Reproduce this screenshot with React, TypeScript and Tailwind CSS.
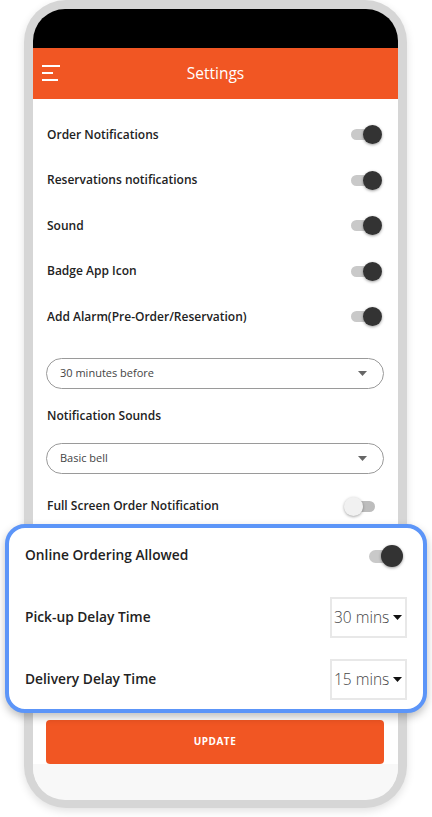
type ToggleProps = { on?: boolean; big?: boolean };

function Toggle({ on = true, big = false }: ToggleProps) {
  if (!on) {
    return (
      <div className="relative h-[19px] w-[31px] shrink-0">
        <div className="absolute right-0 top-[4px] h-[11px] w-[22px] rounded-full bg-[#bdbdbd]" />
        <div className="absolute left-0 top-0 h-[19px] w-[19px] rounded-full bg-[#f1f1f1] shadow-[0_1px_3px_rgba(0,0,0,0.35)]" />
      </div>
    );
  }
  if (big) {
    return (
      <div className="relative h-[22px] w-[34px] shrink-0">
        <div className="absolute left-0 top-[5px] h-[13px] w-[24px] rounded-full bg-[#c9c9c9]" />
        <div className="absolute right-0 top-0 h-[22px] w-[22px] rounded-full bg-[#333333] shadow-[0_1px_3px_rgba(0,0,0,0.4)]" />
      </div>
    );
  }
  return (
    <div className="relative h-[19px] w-[31px] shrink-0">
      <div className="absolute left-0 top-[4px] h-[11px] w-[22px] rounded-full bg-[#c9c9c9]" />
      <div className="absolute right-0 top-0 h-[19px] w-[19px] rounded-full bg-[#333333] shadow-[0_1px_3px_rgba(0,0,0,0.4)]" />
    </div>
  );
}

function Caret({ className = "" }: { className?: string }) {
  return (
    <svg width="9" height="5" viewBox="0 0 9 5" className={className}>
      <path d="M0 0h9L4.5 5z" fill="currentColor" />
    </svg>
  );
}

function ToggleRow({ label, on = true }: { label: string; on?: boolean }) {
  return (
    <div className="flex h-[45.5px] items-center justify-between">
      <span className="text-[12px] font-semibold text-[#222]">{label}</span>
      <Toggle on={on} />
    </div>
  );
}

function PillSelect({ value }: { value: string }) {
  return (
    <div className="flex h-[31px] items-center justify-between rounded-full border border-[#9a9a9a] pl-[13px] pr-[16px]">
      <span className="text-[11px] text-[#444]">{value}</span>
      <Caret className="text-[#666]" />
    </div>
  );
}

function BoxSelect({ value }: { value: string }) {
  return (
    <div className="flex h-[41px] w-[77px] items-center gap-[4px] border-2 border-[#e8e8e8] pl-[2px]">
      <span className="text-[15.5px] font-light text-[#444]">{value}</span>
      <Caret className="text-[#111]" />
    </div>
  );
}

export default function App() {
  const rows = [
    "Order Notifications",
    "Reservations notifications",
    "Sound",
    "Badge App Icon",
    "Add Alarm(Pre-Order/Reservation)",
  ];

  return (
    <div className="h-[817px] w-[432px] overflow-hidden bg-white font-['Open_Sans',sans-serif]">
      {/* phone frame */}
      <div className="ml-[24px] h-[808px] w-[383px] rounded-[42px] bg-[#d6d6d6] p-[9px] shadow-[0_3px_8px_rgba(0,0,0,0.12)]">
        <div className="flex h-full flex-col rounded-[32px] bg-white">
          <div className="h-[39px] shrink-0 rounded-t-[32px] bg-black" />
          <header className="relative flex h-[51px] shrink-0 items-center justify-center bg-[#f15623]">
            <div className="absolute left-[9px] top-[17px] flex flex-col gap-[5px]">
              <div className="h-[2px] w-[18px] bg-white" />
              <div className="h-[2px] w-[11px] bg-white" />
              <div className="h-[2px] w-[16px] bg-white" />
            </div>
            <span className="text-[15.5px] text-white">Settings</span>
          </header>

          <div className="flex flex-1 flex-col">
            <div className="px-[14px] pt-[13px] pr-[16px]">
              {rows.map((r) => (
                <ToggleRow key={r} label={r} />
              ))}
            </div>

            <div className="mt-[18px] px-[13px] pr-[14px]">
              <PillSelect value="30 minutes before" />
            </div>

            <div className="mt-[19px] flex h-[17px] items-center px-[14px]">
              <span className="text-[12px] font-semibold text-[#222]">Notification Sounds</span>
            </div>

            <div className="mt-[18px] px-[13px] pr-[14px]">
              <PillSelect value="Basic bell" />
            </div>

            <div className="mt-[23px] flex h-[19px] items-center justify-between pl-[14px] pr-[23px]">
              <span className="text-[12px] font-semibold text-[#222]">Full Screen Order Notification</span>
              <Toggle on={false} />
            </div>

            {/* highlighted card */}
            <div className="relative z-10 -ml-[28px] -mr-[29px] mt-[8px] rounded-[20px] border-4 border-[#5c95f8] bg-white pb-[9px] pl-[16px] pr-[16px] pt-[8px] shadow-[0_4px_8px_rgba(0,0,0,0.25)]">
              <div className="flex h-[40px] items-center justify-between pr-[4px]">
                <span className="text-[13.75px] font-semibold text-[#222]">Online Ordering Allowed</span>
                <Toggle big />
              </div>
              <div className="mt-[22px] flex h-[40px] items-center justify-between">
                <span className="text-[13.75px] font-semibold text-[#222]">Pick-up Delay Time</span>
                <BoxSelect value="30 mins" />
              </div>
              <div className="mt-[22px] flex h-[40px] items-center justify-between">
                <span className="text-[13.75px] font-semibold text-[#222]">Delivery Delay Time</span>
                <BoxSelect value="15 mins" />
              </div>
            </div>

            <div className="mt-[7px] px-[13px] pr-[14px]">
              <button className="flex h-[44px] w-full items-center justify-center rounded-[4px] bg-[#f15623] text-[10px] font-bold tracking-[0.5px] text-white">
                UPDATE
              </button>
            </div>

            <div className="mt-auto h-[36px] rounded-b-[32px] bg-[#f8f8f8]" />
          </div>
        </div>
      </div>
    </div>
  );
}
